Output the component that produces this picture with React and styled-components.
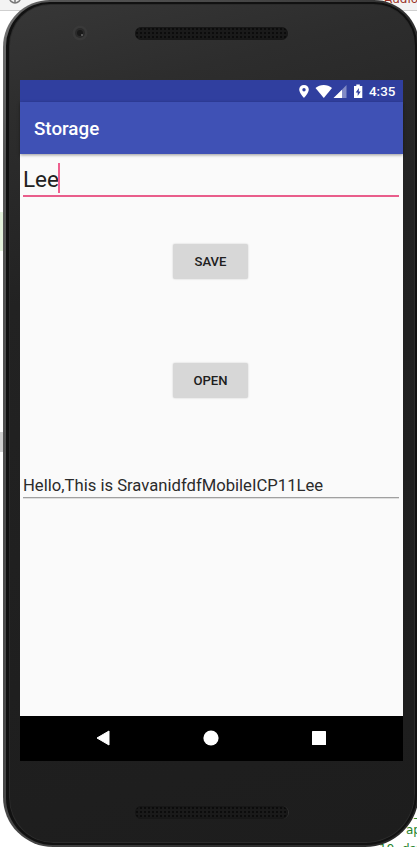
import React from "react";
import styled, { createGlobalStyle } from "styled-components";

const GlobalStyle = createGlobalStyle`
  * { box-sizing: border-box; }
  body { margin: 0; background: #fff; font-family: Roboto, sans-serif; overflow: hidden; }
`;

const Desktop = styled.main`
  position: relative;
  width: 417px;
  height: 847px;
  overflow: hidden;
  background: #fff;
`;

const ToolStrip = styled.div`
  position: absolute;
  inset: 0 0 auto 0;
  height: 11px;
  background: #f3f3f3;
  border-bottom: 1px solid #cfcfcf;
`;

const ToolIcon = styled.svg`
  position: absolute;
  left: 8px;
  top: -9px;
`;

const CodeText = styled.span`
  position: absolute;
  left: ${(p) => p.$x}px;
  top: ${(p) => p.$y}px;
  color: ${(p) => p.$color};
  font: 12px/14px "DejaVu Sans", sans-serif;
  white-space: nowrap;
`;

const GutterMark = styled.div`
  position: absolute;
  left: 0;
  top: ${(p) => p.$y}px;
  width: 4px;
  height: ${(p) => p.$h}px;
  background: ${(p) => p.$color};
`;

const Rim = styled.div`
  position: relative;
  width: 416px;
  height: 847px;
  margin-left: 3px;
  padding: 2px 2px 2px 3px;
  border-radius: 47px 45px 54px 50px;
  background: linear-gradient(105deg, #777 0%, #555 7%, #484848 35%, #303030 65%, #292929 100%);
`;

const Body = styled.div`
  height: 100%;
  display: flex;
  flex-direction: column;
  padding-left: 11px;
  border: solid #111;
  border-width: 2px 2px 2px 3px;
  border-radius: 44px 43px 51px 47px;
  background: linear-gradient(165deg, #373737 0%, #2d2d2d 12%, #222 32%, #1d1d1d 100%);
  box-shadow: inset 0 0 0 1px #2b2b2b;
`;

const TopBezel = styled.header`
  height: 76px;
  display: flex;
  align-items: flex-start;
  padding: 20px 0 0 51px;
`;

const Camera = styled.svg`
  display: block;
  margin-right: 46px;
`;

const Speaker = styled.div`
  width: 153px;
  height: 13px;
  margin-top: 3px;
  border-radius: 7px;
  background: radial-gradient(circle, #0c0c0c 0.8px, #1a1a1a 1.2px) 0 0 / 4px 4px;
  box-shadow: inset 0 0 2px #101010, 1px 0 0 #303030;
`;

const BottomBezel = styled.footer`
  padding: 45px 0 0 115px;
  & ${Speaker} { margin-top: 0; }
`;

const Screen = styled.section`
  width: 383px;
  height: 681px;
  display: flex;
  flex-direction: column;
  background: #fafafa;
`;

const StatusBar = styled.div`
  height: 22px;
  display: flex;
  justify-content: flex-end;
  align-items: center;
  padding-right: 7px;
  background: #303f9f;
  color: #fff;
`;

const StatusIcons = styled.svg`
  display: block;
  margin-right: 4px;
`;

const Clock = styled.span`
  width: 27px;
  padding-top: 1px;
  font-size: 13.4px;
  line-height: 22px;
  font-weight: 500;
  white-space: nowrap;
`;

const AppBar = styled.div`
  height: 52px;
  flex: none;
  display: flex;
  align-items: center;
  padding: 1px 0 0 14px;
  background: #3f51b5;
  color: #fff;
  font-size: 18.8px;
  font-weight: 500;
  box-shadow: 0 1px 3px rgba(0, 0, 0, 0.4);
`;

const Content = styled.div`
  flex: 1;
  display: flex;
  flex-direction: column;
  align-items: center;
`;

const NameField = styled.div`
  width: 376px;
  height: 43px;
  margin-right: 1px;
  padding-top: 9px;
  display: flex;
  align-items: flex-start;
  border-bottom: 2px solid #e95d8b;
  color: #222;
  font-size: 22.5px;
  line-height: 33px;
`;

const Caret = styled.i`
  width: 2px;
  height: 30px;
  margin-left: -1px;
  background: #ee5f8e;
`;

const Button = styled.button`
  width: 75px;
  height: 35px;
  flex: none;
  margin: ${(p) => p.$gap}px 2px 0 0;
  padding: 0;
  border: 0;
  border-radius: 2px;
  background: #d7d7d7;
  box-shadow: 0 0 2px rgba(0, 0, 0, 0.2);
  color: #202020;
  font: 500 13.1px/36px Roboto, sans-serif;
`;

const ResultField = styled.div`
  width: 376px;
  height: 27px;
  margin: 73px 1px 0 0;
  border-bottom: 1px solid #a0a0a0;
  box-shadow: 0 1px 0 #dedede;
  color: #2b2b2b;
  font-size: 16.65px;
  line-height: 29px;
  white-space: nowrap;
`;

const NavBar = styled.nav`
  height: 45px;
  display: flex;
  align-items: center;
  justify-content: center;
  gap: 92px;
  padding: 0 2px 1px 0;
  background: #000;
`;

export default function App() {
  return (
    <>
      <GlobalStyle />
      <Desktop>
        <ToolStrip />
        <ToolIcon width="14" height="14" viewBox="0 0 14 14" fill="none" stroke="#777" strokeWidth="1.5">
          <circle cx="7" cy="6.5" r="5.5" />
          <path d="M7 1v11M1 7h12" />
        </ToolIcon>
        <CodeText $x={384} $y={-8} $color="#9b3328">Audio</CodeText>
        <GutterMark $y={212} $h={39} $color="#e4f2dc" />
        <GutterMark $y={432} $h={20} $color="#cfcfcf" />
        <CodeText $x={414} $y={805} $color="#27852d">_</CodeText>
        <CodeText $x={406} $y={823} $color="#27852d">ap</CodeText>
        <CodeText $x={379} $y={842} $color="#27852d">19, dat</CodeText>
        <Rim>
          <Body>
            <TopBezel>
              <Camera width="18" height="18" viewBox="0 0 18 18">
                <circle cx="9" cy="9" r="7.5" fill="#393939" />
                <circle cx="9" cy="9" r="5" fill="#2a2a2a" />
                <circle cx="9" cy="9" r="3" fill="#191919" />
                <circle cx="11" cy="11" r="1" fill="#686868" />
              </Camera>
              <Speaker />
            </TopBezel>
            <Screen>
              <StatusBar>
                <StatusIcons width="67" height="16" viewBox="0 0 67 16" fill="#fff">
                  <path fillRule="evenodd" d="M6 2C3.2 2 1.2 4 1.2 6.6 1.2 10 6 15 6 15s4.8-5 4.8-8.4C10.8 4 8.8 2 6 2Zm0 3a1.7 1.7 0 1 1 0 3.4A1.7 1.7 0 0 1 6 5Z" />
                  <path d="M17.5 5c4.5-4 12-4 16.500 0L25.800 15Z" />
                  <path d="M48.500 2v13H36Z" opacity=".4" />
                  <path d="M44 6.700V15h-8.500Z" />
                  <path fillRule="evenodd" d="M56 3h2.300V1.500h3.500V3H64.300v12H56ZM61 5l-3.300 4.500h2V13l3-4.500h-2Z" />
                </StatusIcons>
                <Clock>4:35</Clock>
              </StatusBar>
              <AppBar>Storage</AppBar>
              <Content>
                <NameField>Lee<Caret /></NameField>
                <Button $gap={47}>SAVE</Button>
                <Button $gap={84}>OPEN</Button>
                <ResultField>Hello,This is SravanidfdfMobileICP11Lee</ResultField>
              </Content>
              <NavBar>
                <svg width="16" height="18" viewBox="0 0 16 18">
                  <path d="M14 2v14L2 9Z" fill="#fff" stroke="#fff" strokeLinejoin="round" />
                </svg>
                <svg width="16" height="16" viewBox="0 0 16 16">
                  <circle cx="8" cy="8" r="7.6" fill="#fff" />
                </svg>
                <svg width="16" height="16" viewBox="0 0 16 16">
                  <rect x="1" y="1" width="14" height="14" rx=".5" fill="#fff" />
                </svg>
              </NavBar>
            </Screen>
            <BottomBezel><Speaker /></BottomBezel>
          </Body>
        </Rim>
      </Desktop>
    </>
  );
}
